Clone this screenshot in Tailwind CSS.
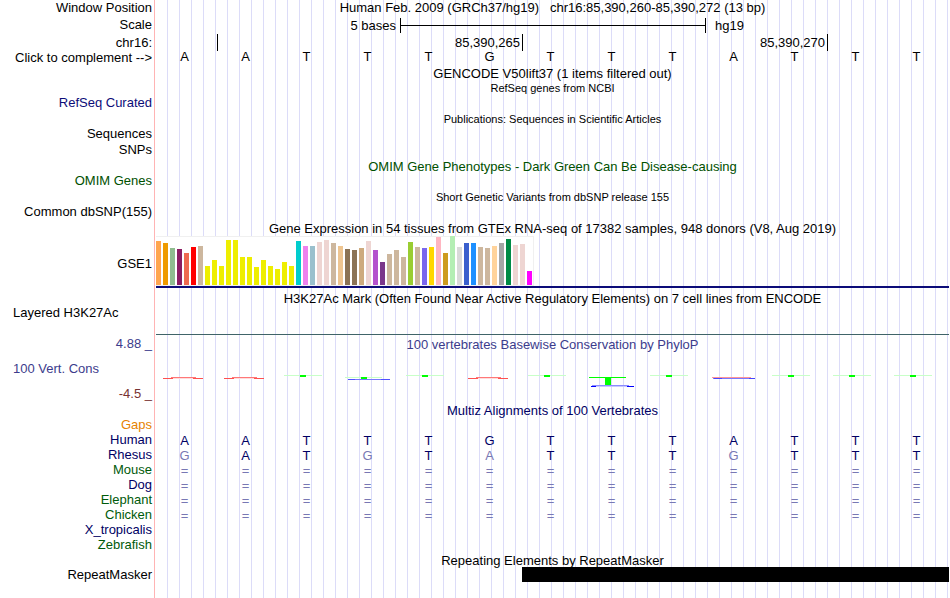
<!DOCTYPE html>
<html lang="en">
<head>
  <meta charset="UTF-8" />
  <meta name="viewport" content="width=device-width, initial-scale=1.0" />
  <title>Genome Browser - chr16:85,390,260-85,390,272</title>
  <script src="https://cdn.jsdelivr.net/npm/@tailwindcss/browser@4"></script>
</head>
<body class="bg-white text-black font-['Liberation_Sans',Arial,sans-serif] text-[13px] leading-[15px]">
  <div class="flex min-h-screen overflow-hidden">

    <!-- Track labels -->
    <aside class="w-[155px] shrink-0 border-r border-[#ffb4b4] pr-0.5 text-right whitespace-nowrap">
      <div class="h-4 leading-4">Window Position</div>
      <div class="h-[18px] pt-px">Scale</div>
      <div class="h-4 pt-px">chr16:</div>
      <div class="h-[15px]">Click to complement --&gt;</div>
      <div class="mt-[30px] text-[#0c0c78]">RefSeq Curated</div>
      <div class="mt-4">Sequences</div>
      <div class="h-4 pt-px">SNPs</div>
      <div class="mt-4 text-[#005000]">OMIM Genes</div>
      <div class="mt-4">Common dbSNP(155)</div>
      <div class="mt-4 flex h-14 items-center justify-end">GSE1</div>
      <div class="mt-3.5 pl-[13px] text-left">Layered H3K27Ac</div>
      <div class="mt-4 text-[#3c3c8c]">4.88 _</div>
      <div class="mt-2.5 pl-[13px] text-left text-[#3c3c8c]">100 Vert. Cons</div>
      <div class="mt-2.5 text-[#783232]">-4.5 _</div>
      <div class="mt-4 text-[#e68200]">Gaps</div>
      <div class="text-[#000064]">Human</div>
      <div class="text-[#000064]">Rhesus</div>
      <div class="text-[#005a0a]">Mouse</div>
      <div class="text-[#000064]">Dog</div>
      <div class="text-[#005a0a]">Elephant</div>
      <div class="text-[#005a0a]">Chicken</div>
      <div class="text-[#000064]">X_tropicalis</div>
      <div class="text-[#005a0a]">Zebrafish</div>
      <div class="mt-[15px]">RepeatMasker</div>
    </aside>

    <!-- Track data, 13 bases wide -->
    <main class="ml-px mr-px min-w-0 flex-1 bg-[repeating-linear-gradient(to_right,transparent_0_11px,#dcdcf8_11px_12px)] text-center whitespace-nowrap">
      <div class="h-4">Human Feb. 2009 (GRCh37/hg19) &nbsp; chr16:85,390,260-85,390,272 (13 bp)</div>

      <!-- Scale bar -->
      <div class="grid h-[18px] grid-cols-13 items-center">
        <div class="col-span-4 pr-1 text-right">5 bases</div>
        <div class="col-span-5 -mr-px flex h-[15px] items-center border-x border-black">
          <div class="h-px w-full bg-black"></div>
        </div>
        <div class="col-span-4 pl-2.5 text-left">hg19</div>
      </div>

      <!-- Position ruler -->
      <div class="grid h-[15px] grid-cols-13 leading-[17px]">
        <div></div>
        <div class="col-span-5 border-l border-black pr-0.5 text-right">85,390,265</div>
        <div class="col-span-5 border-l border-black pr-0.5 text-right">85,390,270</div>
        <div class="col-span-2 border-l border-black"></div>
      </div>
      <div class="grid h-4 grid-cols-13 leading-4" data-seq="AATTTGTTTATTT"></div>

      <div class="h-4 leading-[17px]">GENCODE V50lift37 (1 items filtered out)</div>
      <div class="h-[15px] text-[11px]">RefSeq genes from NCBI</div>
      <div class="mt-4 text-[11px]">Publications: Sequences in Scientific Articles</div>
      <div class="mt-8 h-4 text-[#005000]">OMIM Gene Phenotypes - Dark Green Can Be Disease-causing</div>
      <div class="mt-[15px] h-4 text-[11px]">Short Genetic Variants from dbSNP release 155</div>
      <div class="mt-[15px]">Gene Expression in 54 tissues from GTEx RNA-seq of 17382 samples, 948 donors (V8, Aug 2019)</div>

      <!-- GTEx bars -->
      <div class="border-b-2 border-[#0c0c78]">
        <div id="gtex" class="flex h-[50px] w-[378px] items-end gap-0.5 border border-l-0 border-[#f0f0f0] bg-white"></div>
      </div>

      <div class="mt-[3px]">H3K27Ac Mark (Often Found Near Active Regulatory Elements) on 7 cell lines from ENCODE</div>
      <div class="h-[29px] border-b border-[#406468]"></div>

      <div class="mt-0.5 text-[#3c3c8c]">100 vertebrates Basewise Conservation by PhyloP</div>
      <div id="phylop" class="mt-[18px] grid h-5 grid-cols-13"></div>

      <!-- Multiz alignment -->
      <div class="mt-[13px] h-[30px] text-[#000064]">Multiz Alignments of 100 Vertebrates</div>
      <div class="text-[#000064]">
        <div class="grid h-[15px] grid-cols-13" data-seq="AATTTGTTTATTT"></div>
        <div class="grid h-[15px] grid-cols-13" data-seq="gATgTaTTTgTTT"></div>
        <div class="grid h-[15px] grid-cols-13" data-seq="============="></div>
        <div class="grid h-[15px] grid-cols-13" data-seq="============="></div>
        <div class="grid h-[15px] grid-cols-13" data-seq="============="></div>
        <div class="grid h-[15px] grid-cols-13" data-seq="============="></div>
      </div>

      <div class="mt-[30px] h-3.5">Repeating Elements by RepeatMasker</div>
      <div class="grid grid-cols-13">
        <div class="col-span-7 col-start-7 h-[15px] bg-black"></div>
      </div>
    </main>
  </div>

  <script>
    // lower case bases differ from human and are drawn dimmed, as are "=" gaps
    document.querySelectorAll("[data-seq]").forEach((row) => {
      for (const base of row.dataset.seq) {
        const cell = document.createElement("span");
        cell.className = /[A-Z]/.test(base) ? "pr-1" : "pr-1 text-[#7878b4]";
        cell.textContent = base.toUpperCase();
        row.appendChild(cell);
      }
    });

    // [colour, height] per tissue
    const tissues = [
      ["#ffa54f", 44], ["#ee9a00", 42], ["#8fbc8f", 37], ["#8b1c62", 36], ["#ee6a50", 32], ["#ff0000", 38],
      ["#cdb79e", 39], ["#eeee00", 19], ["#eeee00", 25], ["#eeee00", 19], ["#eeee00", 45], ["#eeee00", 45],
      ["#eeee00", 28], ["#eeee00", 28], ["#eeee00", 18], ["#eeee00", 25], ["#eeee00", 19], ["#eeee00", 16],
      ["#eeee00", 23], ["#eeee00", 19], ["#00cdcd", 44], ["#ee82ee", 39], ["#9ac0cd", 39], ["#eed5d2", 43],
      ["#eed5d2", 45], ["#cdb79e", 42], ["#eec591", 39], ["#8b7355", 36], ["#8b7355", 35], ["#cdaa7d", 37],
      ["#eed5d2", 44], ["#b452cd", 35], ["#7a378b", 23], ["#cdb79e", 31], ["#cdb79e", 35], ["#cdb79e", 28],
      ["#9acd32", 43], ["#cdb79e", 38], ["#7a67ee", 37], ["#ffd700", 38], ["#ffb6c1", 48], ["#cd9b1d", 32],
      ["#b4eeb4", 49], ["#d9d9d9", 38], ["#3a5fcd", 42], ["#1e90ff", 42], ["#cdb79e", 38], ["#cdb79e", 37],
      ["#ffd39b", 39], ["#a6a6a6", 42], ["#008b45", 46], ["#eed5d2", 40], ["#eed5d2", 41], ["#ff00ff", 14]
    ];
    const gtex = document.getElementById("gtex");
    tissues.forEach(([color, height]) => {
      const bar = document.createElement("div");
      bar.className = "w-[5px] shrink-0";
      bar.style.backgroundColor = color;
      bar.style.height = height + "px";
      gtex.appendChild(bar);
    });

    // conservation glyphs, one per base
    const glyphs = {
      arc: '<path d="M7 8.5H17M37 8.5H47" stroke="#ff5050"/><path d="M15 7.5H40" stroke="#ff7878"/><path d="M17 8.5H37" stroke="#ffdcdc"/>',
      tee: '<path d="M6 5.5H44" stroke="#c8ffc8"/><path d="M22 5H28V7H22Z" fill="#00ff00"/>',
      low: '<path d="M6 7.5H43" stroke="#c8ffc8"/><path d="M22 7H28V9H22Z" fill="#00ff00"/><path d="M9 9.5H51" stroke="#7878ff"/><path d="M9 9.5H16M42 9.5H51" stroke="#5050ff"/>',
      deep: '<path d="M6 7.5H43" stroke="#00ff00"/><path d="M22 7H28V15H22Z" fill="#00ff00"/><path d="M8 16.5H15M44 16.5H51" stroke="#0000ff"/><path d="M9 15.5H46" stroke="#8c8cff"/><path d="M13 16.5H44" stroke="#c8c8ff"/>',
      mix: '<path d="M7 7.5H46" stroke="#ff9696"/><path d="M8 8.5H50" stroke="#7878ff"/><path d="M9 8.5H17M44 8.5H50" stroke="#4646ff"/>'
    };
    const scores = ["arc", "arc", "tee", "low", "tee", "arc", "tee", "deep", "tee", "mix", "tee", "tee", "tee"];
    document.getElementById("phylop").innerHTML = scores
      .map((s) => `<svg class="h-5 w-[61px]" viewBox="0 0 61 20" fill="none" shape-rendering="crispEdges">${glyphs[s]}</svg>`)
      .join("");
  </script>
</body>
</html>
